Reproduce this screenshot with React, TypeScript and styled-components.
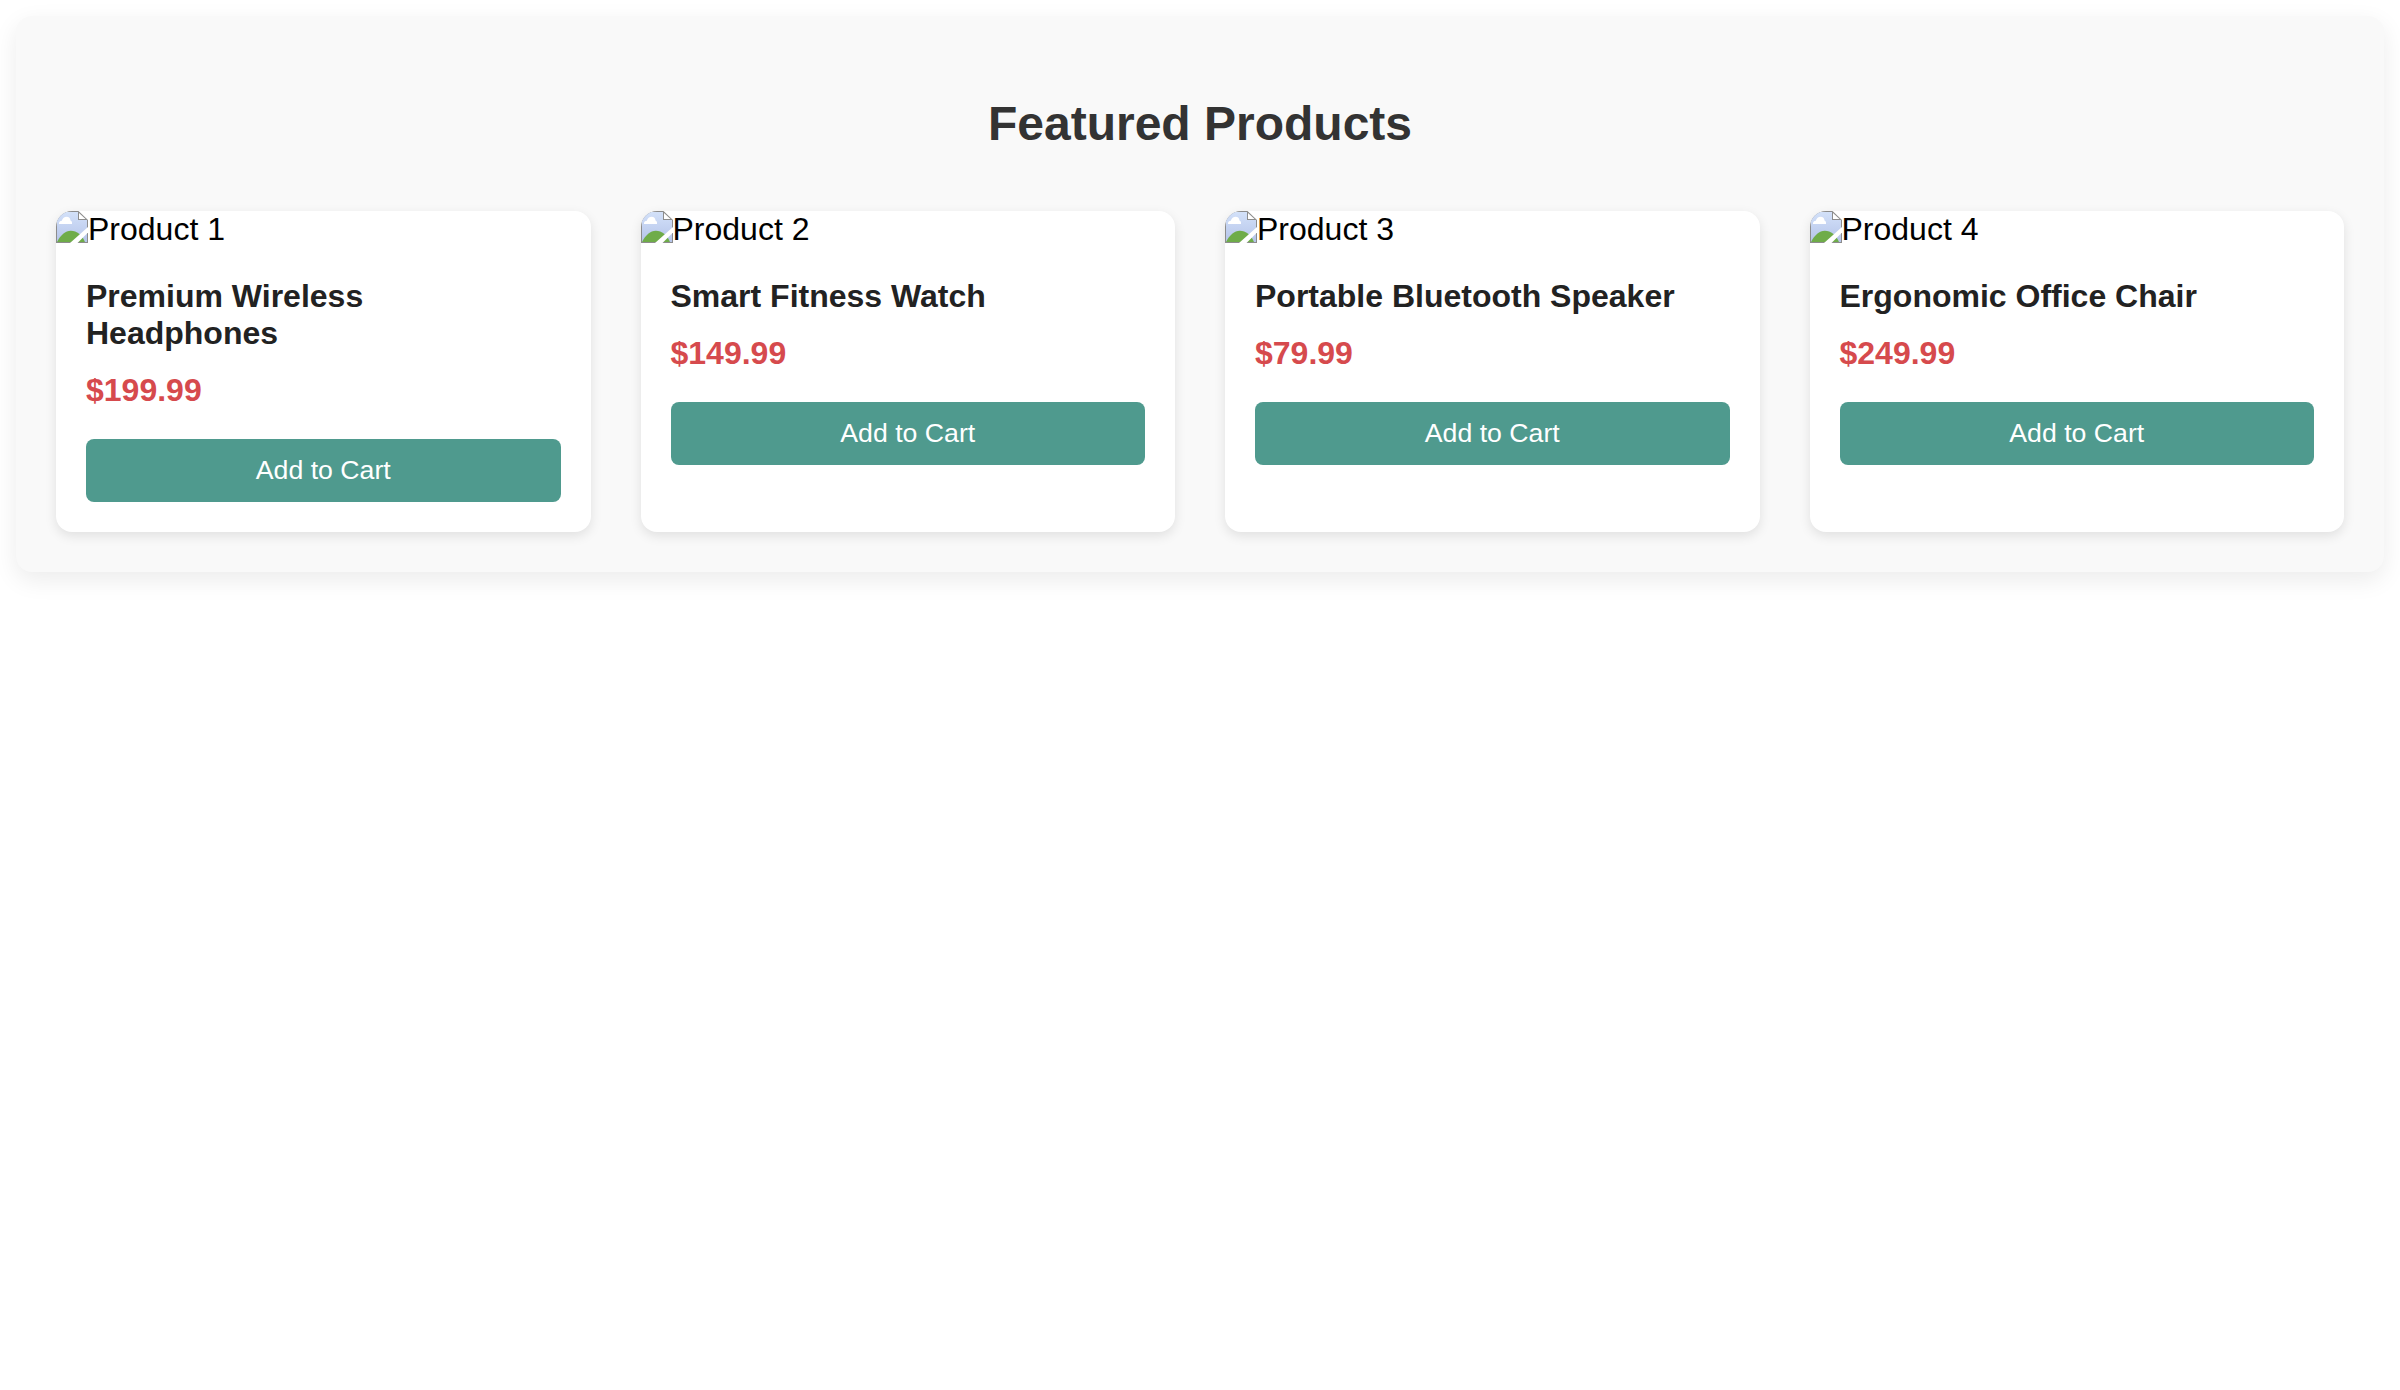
import React from "react";
import styled, { createGlobalStyle } from "styled-components";

const GlobalStyle = createGlobalStyle`
  body {
    margin: 0;
    background: #fff;
    color: #000;
    font-family: "Liberation Sans", Arial, sans-serif;
    font-size: 32px;
  }
`;

const Page = styled.main`
  box-sizing: border-box;
  min-height: 100vh;
  padding: 16px;
  background: #fff;
`;

const Section = styled.section`
  display: flow-root;
  padding: 40px;
  border-radius: 16px;
  background: #f9f9f9;
  box-shadow: 0 8px 24px rgba(0, 0, 0, 0.08);
`;

const Heading = styled.h2`
  margin: 40px 0 60px;
  font-size: 48px;
  line-height: 55px;
  text-align: center;
  color: #333;
`;

const Grid = styled.div`
  display: grid;
  grid-template-columns: repeat(4, 1fr);
  gap: 50px;
`;

const Card = styled.article`
  overflow: hidden;
  border-radius: 16px;
  background: #fff;
  box-shadow: 0 4px 12px rgba(0, 0, 0, 0.1);
`;

const Picture = styled.div`
  display: flex;
  align-items: flex-start;
  height: 37px;
  line-height: 37px;
`;

const Details = styled.div`
  padding: 30px;
`;

const Name = styled.h3`
  margin: 0 0 20px;
  font-size: 32px;
  line-height: 37px;
  color: #222;
`;

const Price = styled.p`
  margin: 0 0 30px;
  font-weight: bold;
  line-height: 37px;
  color: #d64a4d;
`;

const CartButton = styled.button`
  display: block;
  width: 100%;
  height: 63px;
  padding: 0;
  border: 0;
  border-radius: 8px;
  background: #4f9a8e;
  color: #fff;
  font-family: inherit;
  font-size: 26.6667px;
  line-height: 31px;
`;

const products = [
  { alt: "Product 1", name: "Premium Wireless Headphones", price: "$199.99" },
  { alt: "Product 2", name: "Smart Fitness Watch", price: "$149.99" },
  { alt: "Product 3", name: "Portable Bluetooth Speaker", price: "$79.99" },
  { alt: "Product 4", name: "Ergonomic Office Chair", price: "$249.99" },
];

const MissingImageIcon = () => (
  <svg width="32" height="32" viewBox="0 0 32 32" aria-hidden="true">
    <defs>
      <linearGradient id="sky" x1="0" y1="0" x2="0" y2="1">
        <stop offset="0" stopColor="#d3e1f9" />
        <stop offset="1" stopColor="#b5c4e9" />
      </linearGradient>
    </defs>
    <path d="M0 0H22.5L32 9V32H0Z" fill="#8c8c8c" />
    <path d="M1 1H22V9H31V31H1Z" fill="url(#sky)" />
    <path d="M23 2V8H29.5Z" fill="#fff" />
    <path d="M3 13C2.8 10.8 4.2 9.8 5.8 9.8C6.6 7 8.4 5.8 10.6 5.8C13 5.8 14.4 7.4 14.5 9.6C15.8 10.2 16.2 11.5 16 13Z" fill="#fff" />
    <path d="M1 31C4.5 24 9.5 19.7 14.8 19.7C21 19.7 26 24 29 31Z" fill="#6fac49" />
    <path d="M32 16V21.5L21.5 32H14Z" fill="#fff" />
  </svg>
);

export default function App() {
  return (
    <>
      <GlobalStyle />
      <Page>
        <Section>
          <Heading>Featured Products</Heading>
          <Grid>
            {products.map((product) => (
              <Card key={product.alt}>
                <Picture>
                  <MissingImageIcon />
                  <span>{product.alt}</span>
                </Picture>
                <Details>
                  <Name>{product.name}</Name>
                  <Price>{product.price}</Price>
                  <CartButton type="button">Add to Cart</CartButton>
                </Details>
              </Card>
            ))}
          </Grid>
        </Section>
      </Page>
    </>
  );
}
